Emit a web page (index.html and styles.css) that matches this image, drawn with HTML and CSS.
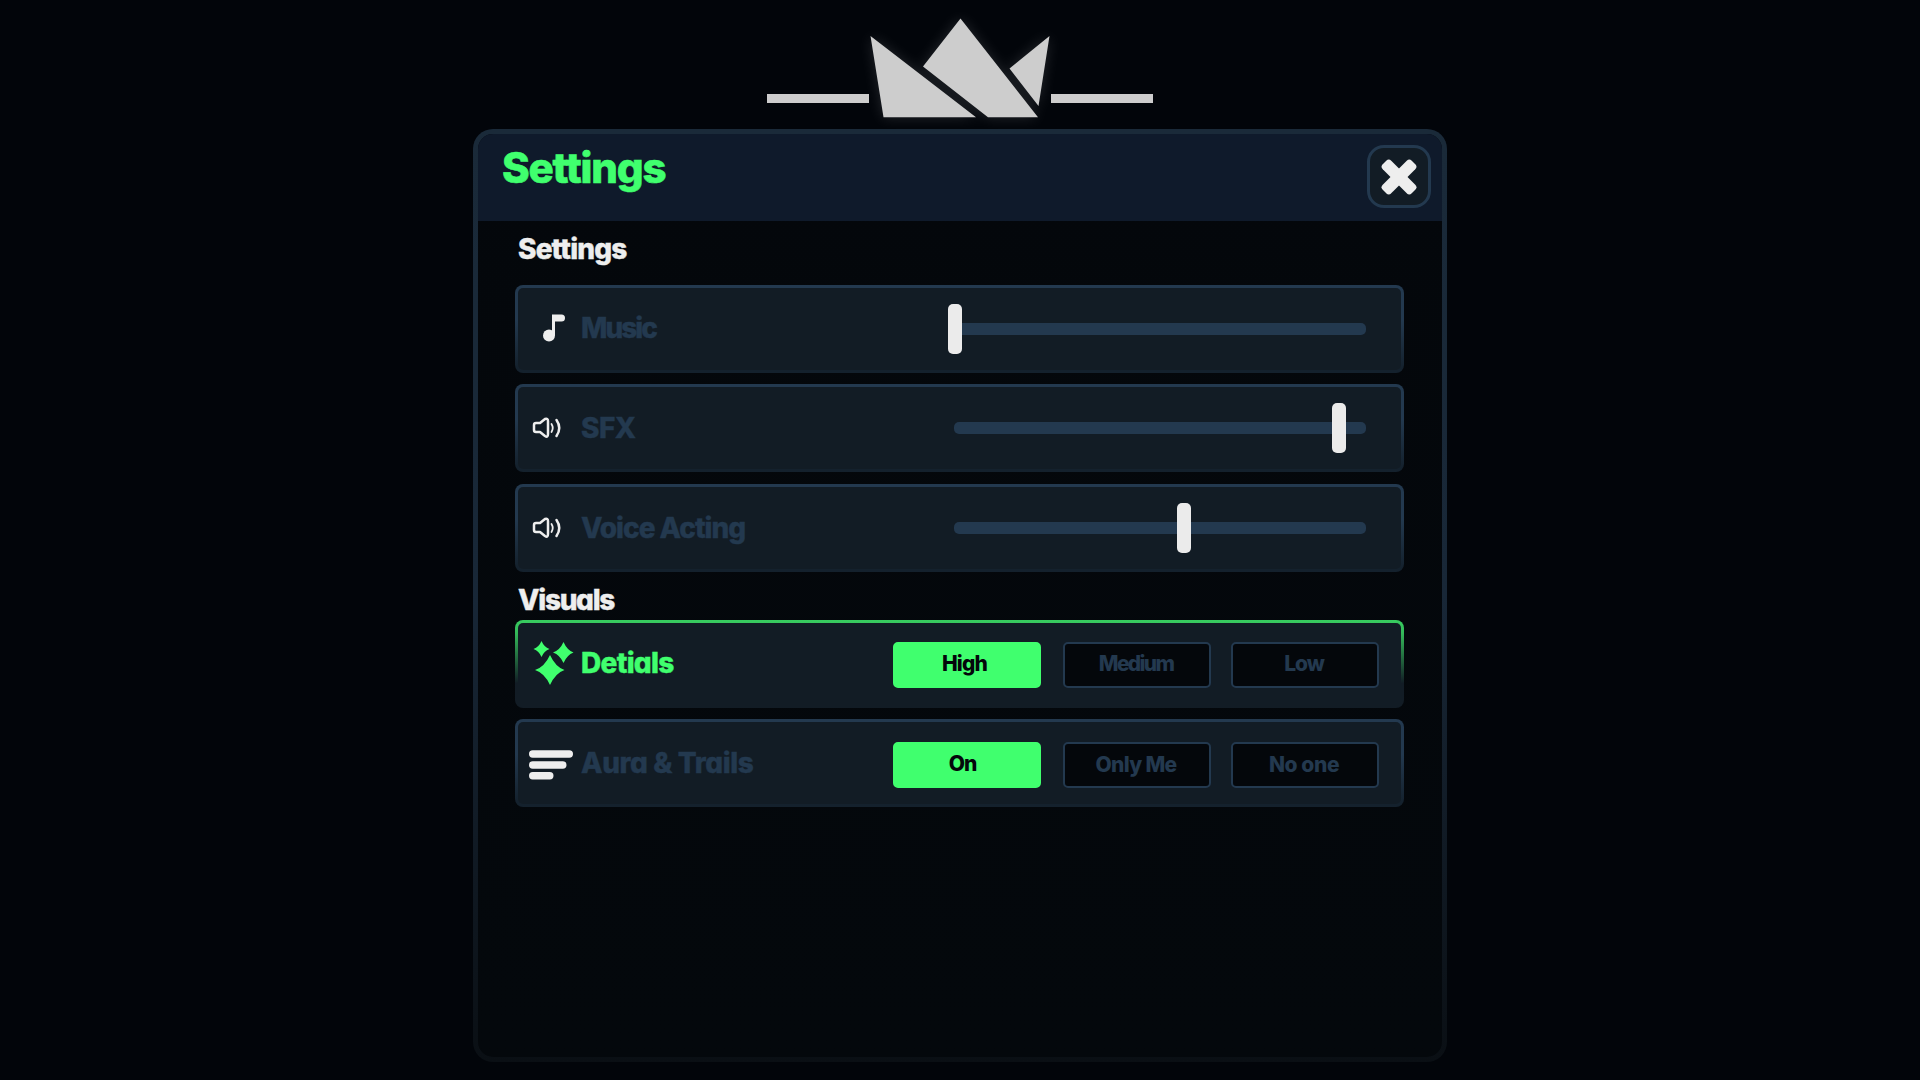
FILE: index.html
```html
<!DOCTYPE html>
<html lang="en">
<head>
<meta charset="utf-8">
<title>Settings</title>
<link rel="stylesheet" href="styles.css">
</head>
<body>
<div class="screen">
  <div class="crest">
    <span class="crest-bar"></span>
    <svg class="crown" width="182" height="82" viewBox="869.500 35.500 182 82">
      <path d="M871 35.500 976.500 116.700H884ZM961 18 923.500 66 988.500 116.700H1038.500ZM1050 35.500 1010 68 1039 105.500Z"/>
    </svg>
    <span class="crest-bar"></span>
  </div>
  <main class="panel">
    <header class="panel-header">
      <h1 class="title">Settings</h1>
      <button class="close" aria-label="Close">
        <svg width="36" height="36" viewBox="-18 -18 36 36"><rect x="-20.500" y="-6" width="41" height="12" rx="3.500" transform="rotate(45)"/><rect x="-20.500" y="-6" width="41" height="12" rx="3.500" transform="rotate(-45)"/></svg>
      </button>
    </header>
    <div class="content">
      <h2 class="heading heading-audio">Settings</h2>
      <section class="group group-audio">
        <div class="row">
          <svg class="icon" width="60" height="60" viewBox="525 299.500 60 60"><circle cx="549" cy="336" r="6"/><path d="M552 315H561.500a3.500 3.500 0 0 1 0 7H555V336H552Z"/></svg>
          <span class="label label-music">Music</span>
          <div class="slider"><span class="thumb" style="left:0.250%"></span></div>
        </div>
        <div class="row">
          <svg class="icon icon-line" width="60" height="60" viewBox="525 398 60 60"><path d="M534 425Q534 423 536 423H540L545 419Q548 418 548 421V434Q548 438 545 436L540 432H536Q534 432 534 430Z"/><path class="thin" d="M551.500 424Q554 428 551.500 432"/><path d="M556.500 420Q562 428 556.500 436"/></svg>
          <span class="label label-sfx">SFX</span>
          <div class="slider"><span class="thumb" style="left:93.450%"></span></div>
        </div>
        <div class="row">
          <svg class="icon icon-line" width="60" height="60" viewBox="525 398 60 60"><path d="M534 425Q534 423 536 423H540L545 419Q548 418 548 421V434Q548 438 545 436L540 432H536Q534 432 534 430Z"/><path class="thin" d="M551.500 424Q554 428 551.500 432"/><path d="M556.500 420Q562 428 556.500 436"/></svg>
          <span class="label label-voice">Voice Acting</span>
          <div class="slider"><span class="thumb" style="left:55.830%"></span></div>
        </div>
      </section>
      <h2 class="heading heading-visuals">Visuals</h2>
      <section class="group">
        <div class="row row-active">
          <svg class="icon" width="60" height="60" viewBox="525 634 60 60"><path d="M541.500 641Q544 647 549.500 649Q544 651 541.500 657Q539 651 533.500 649Q539 647 541.500 641ZM563.500 642Q567 650 573.500 652.500Q567 655 563.500 663Q560 655 553 652.500Q560 650 563.500 642ZM550 655Q555.500 667 564.500 670Q555.500 673 550 685Q544.500 673 535 670Q544.500 667 550 655Z"/></svg>
          <span class="label label-details">Detials</span>
          <div class="options">
            <button class="option selected opt-high">High</button>
            <button class="option opt-medium">Medium</button>
            <button class="option opt-low">Low</button>
          </div>
        </div>
        <div class="row">
          <svg class="icon" width="60" height="60" viewBox="525 733 60 60"><rect x="529" y="750.300" width="44" height="7.500" rx="3.700"/><rect x="529" y="761.300" width="37.500" height="7.500" rx="3.700"/><rect x="529" y="772" width="24.500" height="7.500" rx="3.700"/></svg>
          <span class="label label-aura">Aura &amp; Trails</span>
          <div class="options options-aura">
            <button class="option selected opt-on">On</button>
            <button class="option opt-me">Only Me</button>
            <button class="option opt-none">No one</button>
          </div>
        </div>
      </section>
    </div>
  </main>
</div>
</body>
</html>
```
FILE: styles.css
```css
* { box-sizing: border-box; }
body { margin: 0; background: #02050a; color: #eee; font-family: Inter, "Liberation Sans", sans-serif; font-feature-settings: "cv11"; }
button { font: inherit; font-feature-settings: inherit; padding: 0; }
h1, h2 { margin: 0; }
.screen { height: 1080px; display: flex; flex-direction: column; align-items: center; overflow: hidden; }
.crest { height: 129px; padding-top: 35.5px; display: flex; align-items: flex-start; justify-content: center; }
.crest-bar { width: 102px; height: 9px; margin-top: 58.5px; background: #cdcdcd; }
.crown { display: block; overflow: visible; fill: #cdcdcd; filter: drop-shadow(0 0 7px rgba(255, 255, 255, .14)); }
.panel { width: 974px; height: 933px; border: 5px solid transparent; border-radius: 20px; overflow: hidden;
  background: linear-gradient(#04070b, #04080c) padding-box, linear-gradient(#1a2a39 0%, #182737 50%, #0a0f14 100%) border-box; }
.panel-header { height: 87px; background: #0f1a2b; display: flex; justify-content: space-between; padding: 11px 11px 0 24px; }
.title { color: #40ff6e; font-size: 42px; line-height: 50px; font-weight: 800; letter-spacing: -1.2px; margin-top: -2px; -webkit-text-stroke: .6px; }
.close { width: 64px; height: 63px; border: 3px solid #23394f; border-radius: 17px; background: #121c25; display: grid; place-items: center; }
.close svg { fill: #eee; }
.content { padding: 0 38px 0 37px; }
.heading { font-size: 28px; font-weight: 800; line-height: 34px; height: 34px; margin-left: 3px; white-space: nowrap; -webkit-text-stroke: .4px; }
.heading-audio { margin-top: 11px; letter-spacing: -.85px; }
.heading-visuals { margin-top: 11px; margin-bottom: 3px; letter-spacing: -1.3px; }
.group { display: grid; gap: 11px; }
.group-audio { margin-top: 19px; }
.group-audio .row:last-child { margin-top: 1px; }
.row { height: 88px; display: flex; align-items: center; padding: 0 35px 0 7px; border: 3px solid transparent; border-radius: 8px;
  background: linear-gradient(#121c25, #121c25) padding-box, linear-gradient(#23394f 0%, #23394f 40%, #14212d 95%) border-box; }
.row-active { background: linear-gradient(#121c25, #121c25) padding-box, linear-gradient(#38cc60 0%, #34b859 15%, #121c25 72%) border-box; }
.icon { flex: none; fill: #eee; }
.icon-line { fill: none; stroke: #eee; stroke-width: 2.5; stroke-linejoin: round; stroke-linecap: round; }
.icon-line .thin { stroke-width: 1.8; }
.row-active .icon { fill: #40ff6e; }
.label { color: #23394f; font-size: 28px; line-height: 34px; font-weight: 800; white-space: nowrap; margin-left: -4px; -webkit-text-stroke: .4px; }
.label-music { letter-spacing: -2px; margin-bottom: 3px; }
.label-sfx { letter-spacing: -.6px; }
.label-voice { letter-spacing: -1px; }
.label-details { letter-spacing: -.7px; margin-bottom: 3px; }
.label-aura { letter-spacing: -.4px; }
.row-active .label { color: #40ff6e; }
.slider { position: relative; width: 412px; height: 12px; margin-left: auto; border-radius: 5px; background: #23394f; }
.thumb { position: absolute; top: -19px; width: 14px; height: 50px; margin-left: -7px; border-radius: 5px; background: #ebebeb; }
.options { display: grid; grid-template-columns: 170px 168px 148px; margin: 2px -13px 0 auto; }
.options-aura { margin-top: 4px; }
.option { width: 148px; height: 46px; border: 2px solid #23394f; border-radius: 5px; background: #04070b; color: #23394f; font-size: 21px; font-weight: 800; padding: 0 2px 2px 0; }
.selected { background: #40ff6e; border-color: #40ff6e; color: #04070b; }
.opt-high { letter-spacing: -.8px; padding: 0 5px 3px 0; }
.opt-medium { letter-spacing: -1.7px; padding: 0 2px 3px 0; }
.opt-low { letter-spacing: -1px; padding-bottom: 3px; }
.opt-on { letter-spacing: -1px; padding: 0 9px 3px 0; }
.opt-me { letter-spacing: -.7px; }
.opt-none { letter-spacing: -.4px; }
```
